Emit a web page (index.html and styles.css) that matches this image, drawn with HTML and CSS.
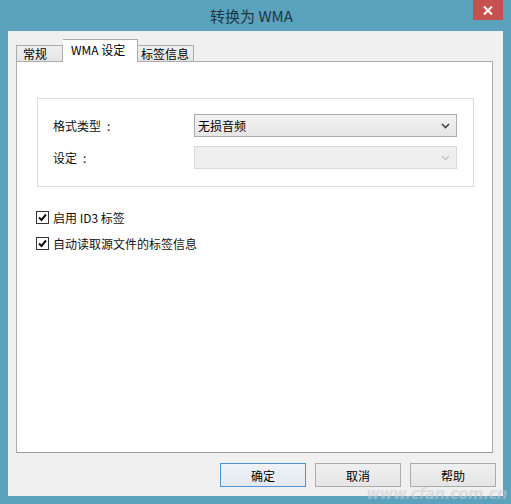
FILE: index.html
```html
<!DOCTYPE html>
<html>
<head>
<meta charset="utf-8">
<link rel="stylesheet" href="styles.css">
</head>
<body>
<div class="window">
  <div class="titlebar">
    <div class="title">转换为 WMA</div>
    <div class="close"><svg width="10" height="9" viewBox="0 0 10 9"><path d="M1 0.5 L9 8.5 M9 0.5 L1 8.5" stroke="#fff" stroke-width="2"/></svg></div>
  </div>
  <div class="client">
    <div class="tabs">
      <div class="tab t1">常规</div>
      <div class="tab active">WMA 设定</div>
      <div class="tab t3">标签信息</div>
    </div>
    <div class="panel">
      <div class="group">
        <div class="row">
          <span class="label">格式类型<span class="colon">:</span></span>
          <div class="select">
            <span>无损音频</span>
            <svg width="9" height="6" viewBox="0 0 9 6"><path d="M1 1 L4.5 4.5 L8 1" fill="none" stroke="#444" stroke-width="1.6"/></svg>
          </div>
        </div>
        <div class="row row2">
          <span class="label">设定<span class="colon">:</span></span>
          <div class="select disabled">
            <span></span>
            <svg width="9" height="6" viewBox="0 0 9 6"><path d="M1 1 L4.5 4.5 L8 1" fill="none" stroke="#c4c4c4" stroke-width="1.4"/></svg>
          </div>
        </div>
      </div>
      <div class="check first">
        <span class="box"><svg width="11" height="11" viewBox="0 0 11 11"><path d="M2 5.5 L4.5 8 L9 2.5" fill="none" stroke="#111" stroke-width="2"/></svg></span>
        <span>启用 ID3&nbsp;标签</span>
      </div>
      <div class="check">
        <span class="box"><svg width="11" height="11" viewBox="0 0 11 11"><path d="M2 5.5 L4.5 8 L9 2.5" fill="none" stroke="#111" stroke-width="2"/></svg></span>
        <span>自动读取源文件的标签信息</span>
      </div>
    </div>
    <div class="buttons">
      <div class="btn default">确定</div>
      <div class="btn">取消</div>
      <div class="btn">帮助</div>
    </div>
  </div>
  <div class="watermark">www.cfan.com.cn</div>
</div>
</body>
</html>
```
FILE: styles.css
```css
html, body {
  margin: 0;
  padding: 0;
  background: #ffffff;
}
body {
  font-family: "Noto Sans CJK SC", "Noto Sans", sans-serif;
  font-size: 12px;
  color: #000;
}
.window {
  position: relative;
  width: 511px;
  height: 504px;
  box-sizing: border-box;
  background: #5ba2bc;
  padding: 0 8px 8px 8px;
  display: flex;
  flex-direction: column;
}
.titlebar {
  height: 31px;
  position: relative;
  display: flex;
  align-items: center;
  justify-content: center;
}
.title {
  font-size: 15px;
  color: #1b3746;
  margin-top: -1px;
  margin-left: -8px;
}
.close {
  position: absolute;
  right: 0;
  top: 0;
  width: 30px;
  height: 20px;
  background: #c75050;
  display: flex;
  align-items: center;
  justify-content: center;
}
.client {
  flex: 1;
  background: #f0f0f0;
  display: flex;
  flex-direction: column;
  padding: 8px 10px 9px 8px;
  box-sizing: border-box;
}
.tabs {
  display: flex;
  align-items: flex-end;
  height: 22px;
  position: relative;
  z-index: 2;
}
.tab {
  height: 16px;
  line-height: 15px;
  box-sizing: border-box;
  border: 1px solid #acacac;
  border-bottom: none;
  background: linear-gradient(#f0f0f0, #e5e5e5);
}
.t1 { width: 47px; padding-left: 6px; }
.t3 { width: 56px; padding-left: 3px; border-left: none; }
.tab.active {
  height: 23px;
  line-height: 20px;
  background: #fff;
  padding-left: 8px;
  width: 75px;
  margin-bottom: -1px;
  border-left: none;
  position: relative;
}
.panel {
  flex: 1;
  background: #fff;
  border: 1px solid #acacac;
  border-bottom-color: #9a9a9a;
  padding: 36px 18px 0 20px;
  box-sizing: border-box;
}
.group {
  border: 1px solid #dcdcdc;
  height: 89px;
  box-sizing: border-box;
  padding: 15px 16px 0 15px;
}
.row {
  display: flex;
  align-items: center;
}
.row2 { margin-top: 9px; }
.label {
  width: 141px;
  color: #111;
}
.colon {
  margin-left: 6px;
}
.select {
  flex: 1;
  height: 23px;
  box-sizing: border-box;
  border: 1px solid #acacac;
  background: linear-gradient(#f2f2f2, #e6e6e6);
  display: flex;
  align-items: center;
  justify-content: space-between;
  padding: 0 6px 0 3px;
  color: #000;
}
.select.disabled {
  border-color: #d9d9d9;
  background: #efefef;
}
.check {
  display: flex;
  align-items: center;
  margin-left: -1px;
  height: 15px;
  color: #111;
}
.check.first { margin-top: 23px; }
.check + .check { margin-top: 11px; }
.box {
  width: 13px;
  height: 13px;
  box-sizing: border-box;
  border: 1px solid #333;
  background: #fff;
  display: flex;
  align-items: center;
  justify-content: center;
  margin-right: 4px;
}
.buttons {
  display: flex;
  justify-content: flex-end;
  gap: 9px;
  padding-top: 10px;
  margin-right: -3px;
}
.btn {
  width: 86px;
  height: 24px;
  box-sizing: border-box;
  border: 1px solid #acacac;
  background: linear-gradient(#f0f0f0, #e5e5e5);
  display: flex;
  align-items: center;
  justify-content: center;
  color: #000;
}
.btn.default {
  border-color: #4d94d0;
  background: linear-gradient(#eef3f7, #e3e9ee);
}
.watermark {
  position: absolute;
  right: 4px;
  bottom: 2px;
  font-family: "DejaVu Sans", sans-serif;
  font-style: italic;
  font-weight: bold;
  font-size: 15px;
  line-height: 16px;
  color: rgba(200, 205, 210, 0.55);
  letter-spacing: -0.5px;
}
```
